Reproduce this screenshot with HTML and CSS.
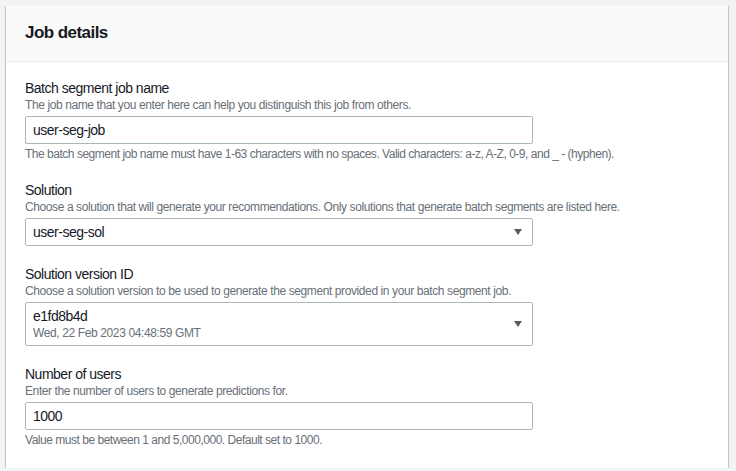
FILE: index.html
```html
<!DOCTYPE html>
<html lang="en">
<head>
<meta charset="utf-8">
<title>Job details</title>
<link rel="stylesheet" href="styles.css">
</head>
<body>
<div class="page">
  <section class="card">
    <header class="card-header">
      <h2 class="card-title">Job details</h2>
    </header>
    <div class="card-body">
      <div class="field">
        <div class="label">Batch segment job name</div>
        <div class="desc">The job name that you enter here can help you distinguish this job from others.</div>
        <div class="control input">user-seg-job</div>
        <div class="constraint">The batch segment job name must have 1-63 characters with no spaces. Valid characters: a-z, A-Z, 0-9, and _ - (hyphen).</div>
      </div>
      <div class="field">
        <div class="label">Solution</div>
        <div class="desc">Choose a solution that will generate your recommendations. Only solutions that generate batch segments are listed here.</div>
        <div class="control select">
          <div class="select-value">user-seg-sol</div>
          <svg class="caret" width="16" height="16" viewBox="0 0 16 16"><path d="M4 5h8l-4 6z" fill="#545b64"/></svg>
        </div>
      </div>
      <div class="field">
        <div class="label">Solution version ID</div>
        <div class="desc">Choose a solution version to be used to generate the segment provided in your batch segment job.</div>
        <div class="control select select-tall">
          <div class="select-value">
            <div>e1fd8b4d</div>
            <div class="select-sub">Wed, 22 Feb 2023 04:48:59 GMT</div>
          </div>
          <svg class="caret" width="16" height="16" viewBox="0 0 16 16"><path d="M4 5h8l-4 6z" fill="#545b64"/></svg>
        </div>
      </div>
      <div class="field">
        <div class="label">Number of users</div>
        <div class="desc">Enter the number of users to generate predictions for.</div>
        <div class="control input">1000</div>
        <div class="constraint">Value must be between 1 and 5,000,000. Default set to 1000.</div>
      </div>
    </div>
  </section>
</div>
</body>
</html>
```
FILE: styles.css
```css
html, body {
  margin: 0;
  padding: 0;
}
body {
  background: #f2f3f3;
  font-family: "Liberation Sans", Arial, sans-serif;
  color: #16191f;
}
.page {
  padding: 5px 8px 0 6px;
}
.card {
  background: #ffffff;
  box-shadow: 0 1px 1px 0 rgba(0, 28, 36, 0.3), 1px 1px 1px 0 rgba(0, 28, 36, 0.15), -1px 1px 1px 0 rgba(0, 28, 36, 0.15);
}
.card-header {
  background: #fafafa;
  border-bottom: 1px solid #eaeded;
  height: 56px;
  display: flex;
  align-items: center;
  padding: 0 19px;
}
.card-title {
  margin: 0;
  font-size: 17px;
  line-height: 22px;
  font-weight: 700;
  letter-spacing: -0.55px;
  color: #16191f;
}
.card-body {
  padding: 17px 19px 20px;
  display: flex;
  flex-direction: column;
  gap: 19px;
}
.field {
  display: flex;
  flex-direction: column;
  align-items: flex-start;
}
.label {
  font-size: 14px;
  line-height: 18px;
  letter-spacing: -0.5px;
  color: #16191f;
}
.desc {
  font-size: 12px;
  line-height: 16px;
  letter-spacing: -0.4px;
  color: #687078;
}
.control {
  margin-top: 3px;
  width: 508px;
  box-sizing: border-box;
  border: 1px solid #aab7b8;
  border-radius: 2px;
  background: #fff;
  font-size: 14px;
  letter-spacing: -0.5px;
  color: #16191f;
}
.input {
  height: 28px;
  line-height: 26px;
  padding: 0 7px;
}
.select {
  display: flex;
  align-items: center;
  justify-content: space-between;
  height: 28px;
  padding: 0 6px 0 7px;
  line-height: 18px;
}
.select-tall {
  height: 44px;
}
.select-sub {
  font-size: 12px;
  line-height: 16px;
  letter-spacing: -0.38px;
  color: #687078;
}
.caret {
  display: block;
  flex: none;
}
.constraint {
  margin-top: 3px;
  font-size: 12px;
  line-height: 15px;
  letter-spacing: -0.48px;
  color: #687078;
}
```
